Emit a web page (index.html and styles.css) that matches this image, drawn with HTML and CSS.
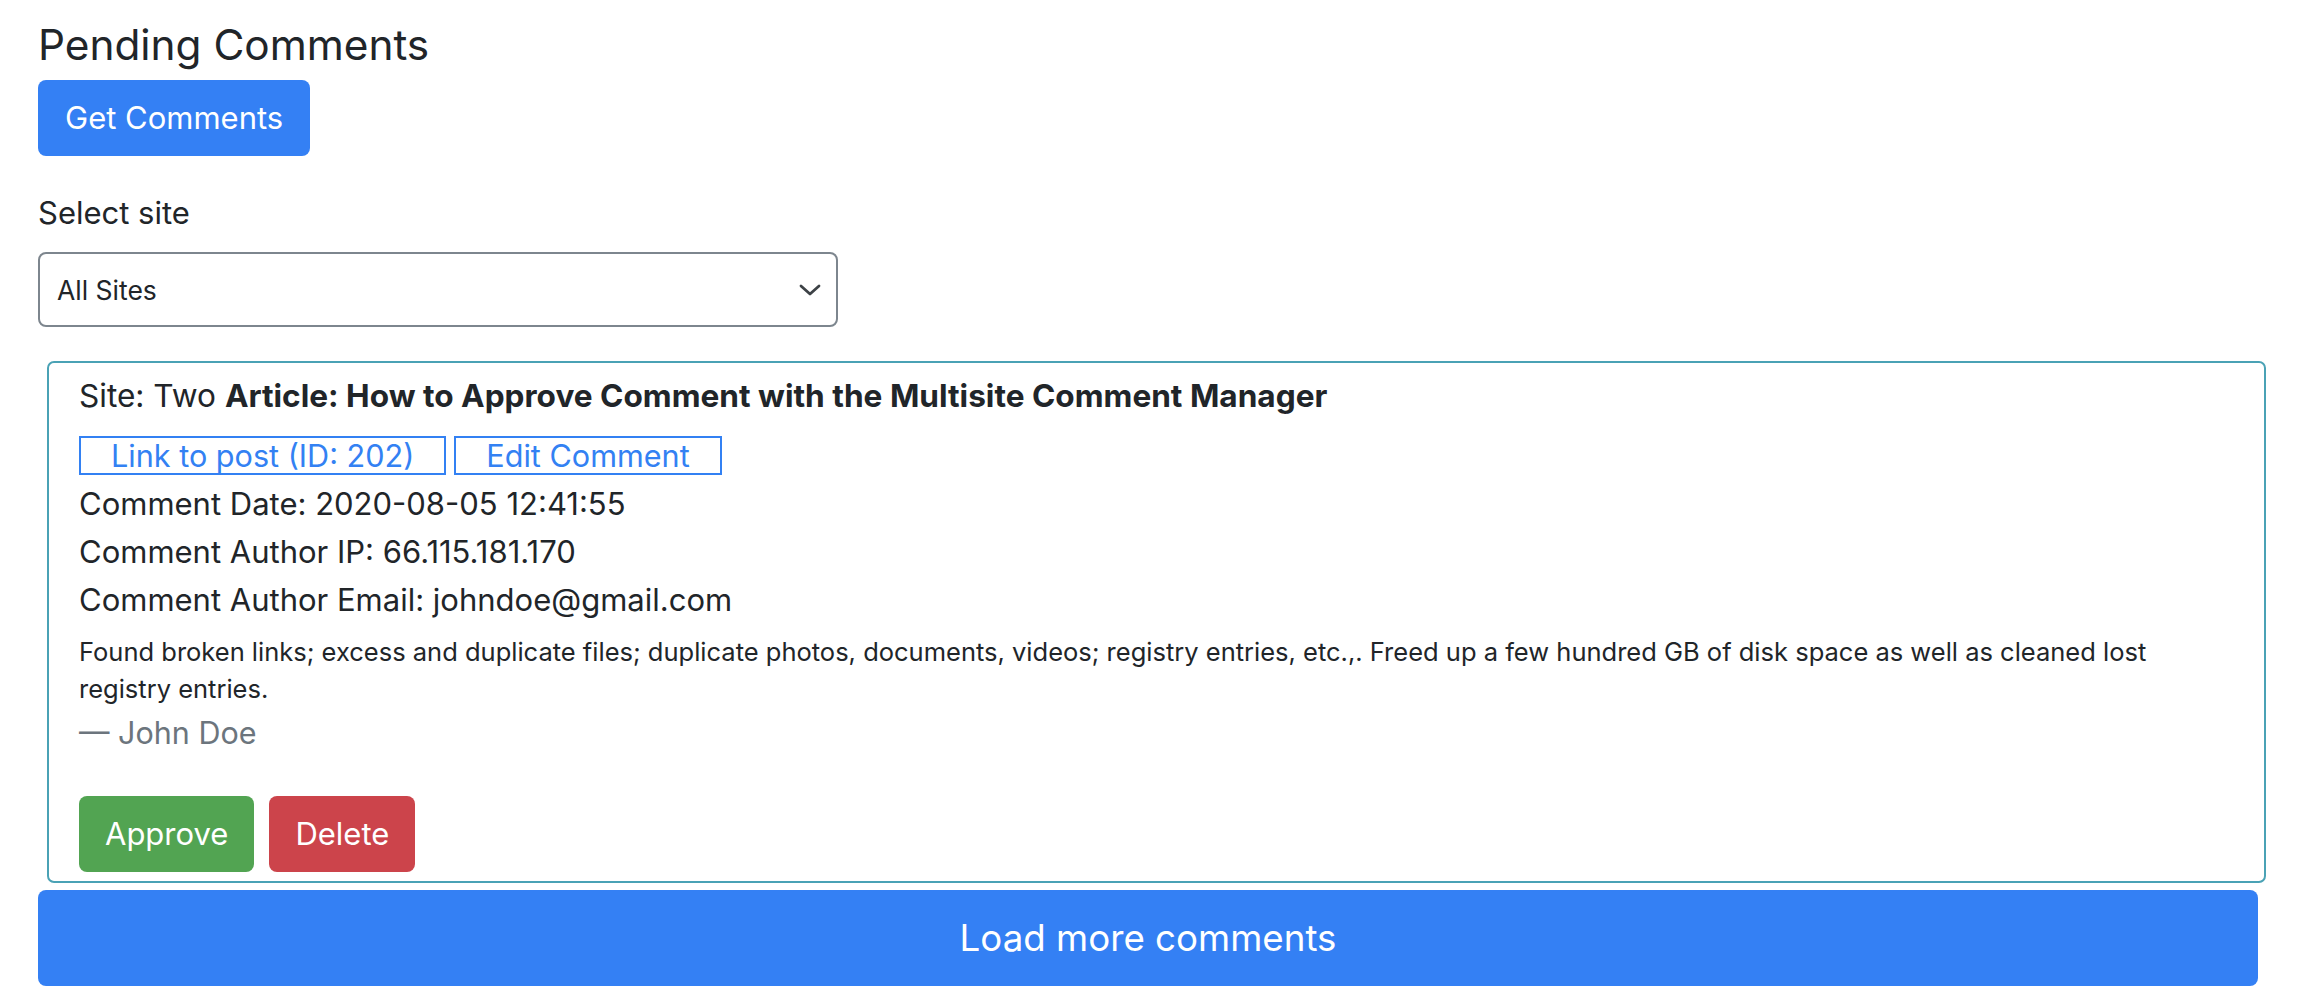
FILE: index.html
```html
<!DOCTYPE html>
<html lang="en">
<head>
<meta charset="utf-8">
<title>Pending Comments</title>
<link rel="stylesheet" href="styles.css">
</head>
<body>
<div class="page">
  <h1 class="title">Pending Comments</h1>
  <button class="btn btn-primary">Get Comments</button>

  <div class="field">
    <label class="label">Select site</label>
    <div class="select">
      <span class="select-value">All Sites</span>
      <svg class="chevron" width="22" height="12" viewBox="0 0 22 12"><polyline points="2,2 11,10 20,2" fill="none" stroke="#3d4246" stroke-width="2.8" stroke-linecap="round" stroke-linejoin="round"/></svg>
    </div>
  </div>

  <div class="card">
    <div class="site-line">Site: Two <strong>Article: How to Approve Comment with the Multisite Comment Manager</strong></div>
    <div class="links">
      <a class="link-box">Link to post (ID: 202)</a>
      <a class="link-box">Edit Comment</a>
    </div>
    <div class="meta">Comment Date: 2020-08-05 12:41:55</div>
    <div class="meta">Comment Author IP: 66.115.181.170</div>
    <div class="meta">Comment Author Email: johndoe@gmail.com</div>
    <p class="comment-text">Found broken links; excess and duplicate files; duplicate photos, documents, videos; registry entries, etc.,. Freed up a few hundred GB of disk space as well as cleaned lost<br>registry entries.</p>
    <div class="comment-author">— John Doe</div>
    <div class="actions">
      <button class="btn btn-success">Approve</button>
      <button class="btn btn-danger">Delete</button>
    </div>
  </div>

  <button class="btn btn-primary btn-block">Load more comments</button>
</div>
</body>
</html>
```

FILE: styles.css
```css
* { box-sizing: border-box; }

html, body {
  margin: 0;
  padding: 0;
  background: #ffffff;
}

body {
  font-family: "Inter", "Noto Sans", "Liberation Sans", sans-serif;
  color: #212529;
}

.page {
  padding: 18px 42px 0 38px;
  display: flex;
  flex-direction: column;
  align-items: flex-start;
}

.title {
  font-size: 42.3px;
  line-height: 54px;
  font-weight: 400;
  margin: 0;
  color: #212529;
}

.btn {
  font-family: inherit;
  border: none;
  color: #ffffff;
  border-radius: 8px;
  cursor: pointer;
  font-size: 31px;
  height: 76px;
  padding: 0 26px;
  line-height: 76px;
}

.btn-primary { background: #3480f4; }
.btn-success { background: #52a452; }
.btn-danger { background: #cc444b; }

.title + .btn { margin-top: 8px; padding: 0 27px; }

.field {
  margin-top: 34px;
  display: flex;
  flex-direction: column;
}

.label {
  font-size: 31px;
  line-height: 46px;
}

.select {
  margin-top: 16px;
  width: 800px;
  height: 75px;
  border: 2px solid #7d868e;
  border-radius: 8px;
  display: flex;
  align-items: center;
  justify-content: space-between;
  padding: 0 15px 0 17px;
}

.select-value {
  font-size: 26.5px;
  color: #212529;
}

.chevron { display: block; }

.card {
  margin: 34px -8px 0 9px;
  align-self: stretch;
  border: 2px solid #4aa2b5;
  border-radius: 7px;
  padding: 10px 30px 9px 30px;
}

.site-line {
  font-size: 31.6px;
  line-height: 45px;
}

.site-line strong { font-weight: 700; }

.links {
  margin-top: 18px;
  display: flex;
  gap: 8px;
}

.link-box {
  display: inline-block;
  border: 2px solid #3381f3;
  color: #3381f3;
  font-size: 30.6px;
  line-height: 35px;
  padding: 0 30px;
}

.meta {
  font-size: 31px;
  line-height: 48px;
}

.links + .meta { margin-top: 5px; }

.comment-text {
  margin: 10px 0 0 0;
  font-size: 25.5px;
  line-height: 36.5px;
}

.comment-author {
  margin-top: 2px;
  font-size: 30.5px;
  line-height: 48px;
  color: #6c757d;
}

.actions {
  margin-top: 39px;
  display: flex;
  gap: 15px;
}

.btn-block {
  margin-top: 7px;
  align-self: stretch;
  height: 96px;
  line-height: 96px;
  font-size: 36.7px;
  text-align: center;
}
```
